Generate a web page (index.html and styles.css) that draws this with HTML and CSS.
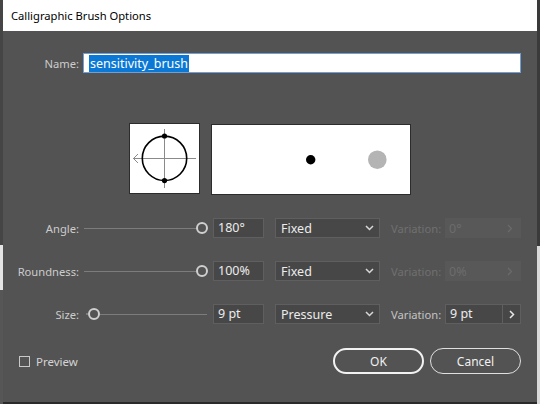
FILE: index.html
```html
<!DOCTYPE html>
<html>
<head>
<meta charset="utf-8">
<link rel="stylesheet" href="styles.css">
</head>
<body>
<div class="dialog">
  <div class="titlebar">Calligraphic Brush Options</div>
  <div class="content">
    <div class="row name-row">
      <span class="lbl">Name:</span>
      <div class="text-input"><span class="sel">sensitivity_brush</span></div>
    </div>

    <div class="previews">
      <div class="pbox tip">
        <svg width="71" height="71" viewBox="0 0 71 71">
          <line x1="4" y1="35.5" x2="67" y2="35.5" stroke="#8a8a8a" stroke-width="1"/>
          <line x1="35.5" y1="6" x2="35.5" y2="65" stroke="#8a8a8a" stroke-width="1"/>
          <polyline points="9,31 4.5,35.5 9,40" fill="none" stroke="#8a8a8a" stroke-width="1"/>
          <circle cx="35.5" cy="35.3" r="22.2" fill="none" stroke="#000" stroke-width="1.6"/>
          <circle cx="35.5" cy="13" r="2.6" fill="#000"/>
          <circle cx="35.5" cy="57.6" r="2.6" fill="#000"/>
        </svg>
      </div>
      <div class="pbox stroke">
        <svg width="200" height="71" viewBox="0 0 200 71">
          <circle cx="99.7" cy="35.7" r="4.7" fill="#000"/>
          <circle cx="166.3" cy="35.7" r="9.3" fill="#b4b4b4"/>
        </svg>
      </div>
    </div>

    <div class="row param">
      <span class="lbl">Angle:</span>
      <div class="slider"><div class="track"></div><span class="knob knob-end"></span></div>
      <div class="num">180°</div>
      <div class="select"><span>Fixed</span><svg class="chev" width="9" height="6" viewBox="0 0 9 6"><polyline points="1,1 4.5,4.5 8,1" fill="none" stroke="#d8d8d8" stroke-width="1.5"/></svg></div>
      <span class="varlbl disabled">Variation:</span>
      <div class="varbox disabled-box"><span class="vartext">0°</span><svg class="arrow" width="6" height="9" viewBox="0 0 6 9"><polyline points="1,1 4.5,4.5 1,8" fill="none" stroke="#6a6a6a" stroke-width="1.3"/></svg></div>
    </div>

    <div class="row param">
      <span class="lbl">Roundness:</span>
      <div class="slider"><div class="track"></div><span class="knob knob-end"></span></div>
      <div class="num">100%</div>
      <div class="select"><span>Fixed</span><svg class="chev" width="9" height="6" viewBox="0 0 9 6"><polyline points="1,1 4.5,4.5 8,1" fill="none" stroke="#d8d8d8" stroke-width="1.5"/></svg></div>
      <span class="varlbl disabled">Variation:</span>
      <div class="varbox disabled-box"><span class="vartext">0%</span><svg class="arrow" width="6" height="9" viewBox="0 0 6 9"><polyline points="1,1 4.5,4.5 1,8" fill="none" stroke="#6a6a6a" stroke-width="1.3"/></svg></div>
    </div>

    <div class="row param">
      <span class="lbl">Size:</span>
      <div class="slider"><div class="track track-size"></div><span class="dotmark"></span><span class="knob knob-start"></span></div>
      <div class="num">9 pt</div>
      <div class="select"><span>Pressure</span><svg class="chev" width="9" height="6" viewBox="0 0 9 6"><polyline points="1,1 4.5,4.5 8,1" fill="none" stroke="#d8d8d8" stroke-width="1.5"/></svg></div>
      <span class="varlbl">Variation:</span>
      <div class="varbox active-box">
        <div class="varfield">9 pt</div>
        <div class="varbtn"><svg width="6" height="9" viewBox="0 0 6 9"><polyline points="1,1 4.5,4.5 1,8" fill="none" stroke="#e6e6e6" stroke-width="1.5"/></svg></div>
      </div>
    </div>

    <div class="footer">
      <div class="check"><span class="box"></span><span class="checklbl">Preview</span></div>
      <div class="buttons">
        <div class="btn btn-ok">OK</div>
        <div class="btn btn-cancel">Cancel</div>
      </div>
    </div>
  </div>
</div>
</body>
</html>
```

FILE: styles.css
```css
html, body {
  margin: 0;
  padding: 0;
}
body {
  width: 540px;
  height: 404px;
  overflow: hidden;
  font-family: "Noto Sans", "Open Sans", sans-serif;
  background:
    linear-gradient(#454545 0 245px, #e4e4e4 245px 290px, #565656 290px) left top / 3px 100% no-repeat,
    linear-gradient(#3a3a3a 0 246px, #d9d9d9 246px) right top / 3px 100% no-repeat,
    #2a2a2a;
}
.dialog {
  margin-left: 3px;
  width: 534px;
  height: 402px;
  background: #535353;
  display: flex;
  flex-direction: column;
}
.titlebar {
  height: 31px;
  background: #ffffff;
  color: #000;
  font-size: 11.2px;
  line-height: 31px;
  padding-left: 8px;
  box-sizing: border-box;
}
.content {
  display: flex;
  flex-direction: column;
}
.row {
  display: flex;
  align-items: center;
  height: 20px;
}
.lbl {
  width: 76px;
  text-align: right;
  color: #cccccc;
  font-size: 11.2px;
  flex: none;
}
.name-row {
  margin-top: 22px;
  gap: 4px;
}
.text-input {
  width: 438px;
  height: 20px;
  box-sizing: border-box;
  background: #fff;
  border: 1px solid #6e9fd6;
  display: flex;
  align-items: center;
  padding-left: 5px;
}
.sel {
  background: #0a78d4;
  color: #fff;
  font-size: 12.5px;
  line-height: 17px;
  padding: 0 1px;
}
.previews {
  margin-top: 50px;
  display: flex;
  justify-content: center;
  gap: 11px;
  align-items: flex-start;
}
.pbox {
  background: #fff;
  border: 1px solid #2c2c2c;
  display: flex;
}
.pbox svg { display: block; }
.tip {
  width: 71px;
  height: 71px;
  box-sizing: border-box;
}
.tip svg { margin: -1px; }
.stroke {
  width: 200px;
  height: 71px;
  box-sizing: border-box;
  margin-top: 1px;
}
.stroke svg { margin: -1px; }
.param {
  margin-top: 23px;
}
.param .slider {
  margin-left: 5px;
  width: 124px;
  height: 20px;
  position: relative;
  flex: none;
}
.track {
  position: absolute;
  left: 0;
  right: 10px;
  top: 9.5px;
  height: 1px;
  background: #7c7c7c;
}
.track-size {
  left: 16px;
  right: 1px;
}
.dotmark {
  position: absolute;
  left: 2px;
  top: 9px;
  width: 2px;
  height: 2px;
  background: #7c7c7c;
}
.knob {
  position: absolute;
  top: 4px;
  width: 12px;
  height: 12px;
  box-sizing: border-box;
  border: 2px solid #cfcfcf;
  border-radius: 50%;
  background: #535353;
}
.knob-end { left: 112px; }
.knob-start { left: 4px; }
.num {
  margin-left: 5px;
  width: 51px;
  height: 20px;
  box-sizing: border-box;
  background: #474747;
  border: 1px solid #5f5f5f;
  color: #ececec;
  font-size: 12.5px;
  line-height: 18px;
  padding-left: 4px;
  flex: none;
}
.select {
  margin-left: 11px;
  width: 105px;
  height: 20px;
  box-sizing: border-box;
  background: #474747;
  border: 1px solid #5f5f5f;
  color: #ececec;
  font-size: 12.5px;
  display: flex;
  align-items: center;
  justify-content: space-between;
  padding: 0 5px 0 5px;
  flex: none;
}
.chev { display: block; }
.varlbl {
  margin-left: 11px;
  width: 50px;
  color: #c4c4c4;
  font-size: 11.2px;
  flex: none;
  white-space: nowrap;
}
.varlbl.disabled { color: #707070; }
.varbox {
  margin-left: 4px;
  width: 76px;
  height: 20px;
  box-sizing: border-box;
  flex: none;
  display: flex;
}
.disabled-box {
  background: #585858;
  align-items: center;
  justify-content: space-between;
  padding: 0 8px 0 4px;
}
.vartext {
  color: #6c6c6c;
  font-size: 12.5px;
}
.arrow { display: block; }
.varfield {
  width: 58px;
  height: 20px;
  box-sizing: border-box;
  background: #474747;
  border: 1px solid #5f5f5f;
  color: #ececec;
  font-size: 12.5px;
  line-height: 18px;
  padding-left: 4px;
}
.varbtn {
  width: 18px;
  height: 20px;
  box-sizing: border-box;
  background: #474747;
  border: 1px solid #5f5f5f;
  border-left: none;
  display: flex;
  align-items: center;
  justify-content: center;
}
.footer {
  margin-top: 24px;
  height: 26px;
  display: flex;
  align-items: center;
  justify-content: space-between;
  padding: 0 16px 0 16px;
}
.check {
  display: flex;
  align-items: center;
  gap: 6px;
}
.box {
  width: 11px;
  height: 11px;
  box-sizing: border-box;
  border: 1px solid #c8c8c8;
}
.checklbl {
  color: #d4d4d4;
  font-size: 11.5px;
}
.buttons {
  display: flex;
  gap: 6px;
}
.btn {
  width: 91px;
  height: 26px;
  box-sizing: border-box;
  border-radius: 13px;
  color: #f0f0f0;
  font-size: 12px;
  display: flex;
  align-items: center;
  justify-content: center;
}
.btn-ok { border: 2px solid #f2f2f2; }
.btn-cancel { border: 1px solid #e0e0e0; }
```
